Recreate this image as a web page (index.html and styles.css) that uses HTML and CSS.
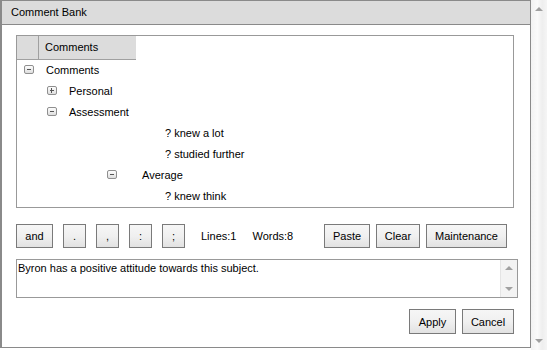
FILE: index.html
```html
<!DOCTYPE html>
<html>
<head>
<meta charset="utf-8">
<link rel="stylesheet" href="styles.css">
</head>
<body>
<div class="page">
  <div class="dialog">
    <div class="titlebar">Comment Bank</div>
    <div class="content">
      <div class="tree">
        <div class="tree-head">
          <div class="head-blank"></div>
          <div class="head-col">Comments</div>
        </div>
        <div class="row lvl0"><span class="tog minus"></span><span class="label">Comments</span></div>
        <div class="row lvl1"><span class="tog plus"></span><span class="label">Personal</span></div>
        <div class="row lvl1"><span class="tog minus"></span><span class="label">Assessment</span></div>
        <div class="row leaf"><span class="label">? knew a lot</span></div>
        <div class="row leaf"><span class="label">? studied further</span></div>
        <div class="row lvl2"><span class="tog minus"></span><span class="label">Average</span></div>
        <div class="row leaf"><span class="label">? knew think</span></div>
      </div>
      <div class="toolbar">
        <button class="btn w-and">and</button>
        <button class="btn w-p">.</button>
        <button class="btn w-p">,</button>
        <button class="btn w-p">:</button>
        <button class="btn w-p">;</button>
        <span class="stat lines">Lines:1</span>
        <span class="stat">Words:8</span>
        <span class="spacer"></span>
        <button class="btn w-paste">Paste</button>
        <button class="btn w-clear">Clear</button>
        <button class="btn w-maint">Maintenance</button>
      </div>
      <div class="textarea">
        <div class="ta-text">Byron has a positive attitude towards this subject.</div>
        <div class="ta-scroll">
          <span class="arr up"></span>
          <span class="arr down"></span>
        </div>
      </div>
      <div class="actions">
        <button class="btn w-apply">Apply</button>
        <button class="btn w-cancel">Cancel</button>
      </div>
    </div>
  </div>
  <div class="pagescroll">
    <span class="arr up"></span>
    <span class="arr down"></span>
  </div>
</div>
</body>
</html>
```
FILE: styles.css
```css
* { box-sizing: border-box; }
html, body { margin: 0; padding: 0; background: #fff; }
body {
  font-family: "Liberation Sans", Arial, sans-serif;
  font-size: 11px;
  color: #000;
}
.page {
  width: 547px;
  height: 350px;
  display: flex;
}
.dialog {
  width: 531px;
  height: 348px;
  border: 1px solid #8a8a8a;
  border-left-width: 2px;
  border-top-width: 1px;
  display: flex;
  flex-direction: column;
}
.titlebar {
  height: 24px;
  background: #dcdcdc;
  border-bottom: 1px solid #8a8a8a;
  padding-left: 9px;
  line-height: 23px;
  font-size: 11px;
}
.content {
  padding: 10px 0 0 14px;
  flex: 1;
  display: flex;
  flex-direction: column;
}
.tree {
  width: 498px;
  height: 173px;
  border: 1px solid #999;
  overflow: hidden;
}
.tree-head {
  display: flex;
  height: 24px;
  width: 119px;
  background: #dcdcdc;
  border-bottom: 1px solid #a0a0a0;
}
.head-blank {
  width: 22px;
  border-right: 1px solid #a0a0a0;
}
.head-col {
  flex: 1;
  padding-left: 6px;
  line-height: 23px;
}
.row {
  height: 21px;
  display: flex;
  align-items: center;
  padding-bottom: 2px;
}
.lvl0 { padding-left: 7px; }
.lvl1 { padding-left: 30px; }
.lvl2 { padding-left: 90px; }
.leaf { padding-left: 148px; }
.tog {
  width: 10px;
  height: 9px;
  border: 1px solid #8f8f8f;
  border-radius: 2px;
  background: linear-gradient(#fdfdfd, #dedede);
  position: relative;
  flex: none;
}
.tog::before {
  content: "";
  position: absolute;
  left: 2px;
  top: 3px;
  width: 4px;
  height: 1px;
  background: #555;
}
.plus::after {
  content: "";
  position: absolute;
  left: 3px;
  top: 1px;
  width: 1px;
  height: 5px;
  background: #555;
}
.lvl0 .label { margin-left: 12px; }
.lvl1 .label { margin-left: 12px; }
.lvl2 .label { margin-left: 25px; }
.toolbar {
  display: flex;
  align-items: center;
  margin-top: 16px;
  height: 24px;
  width: 491px;
}
.btn {
  font-family: "Liberation Sans", Arial, sans-serif;
  font-size: 11px;
  color: #000;
  height: 24px;
  border: 1px solid #7a7a7a;
  background: linear-gradient(#f6f6f6 0%, #f0f0f0 50%, #e2e2e2 100%);
  padding: 0;
  margin: 0;
  border-radius: 0;
}
.w-and { width: 37px; }
.w-p { width: 23px; margin-left: 10px; }
.stat { margin-left: 16px; }
.spacer { flex: 1; }
.w-paste { width: 46px; }
.w-clear { width: 44px; margin-left: 6px; }
.w-maint { width: 81px; margin-left: 6px; }
.textarea {
  margin-top: 11px;
  width: 502px;
  height: 39px;
  border: 1px solid #999;
  display: flex;
}
.ta-text {
  flex: 1;
  padding: 2px 0 0 1px;
}
.ta-scroll {
  width: 17px;
  background: #f3f3f3;
  border-left: 1px solid #e4e4e4;
  position: relative;
}
.arr {
  position: absolute;
  left: 50%;
  margin-left: -4px;
  width: 0;
  height: 0;
  border-left: 4px solid transparent;
  border-right: 4px solid transparent;
}
.arr.up { top: 6px; border-bottom: 4px solid #a0a0a0; }
.arr.down { bottom: 6px; border-top: 4px solid #a0a0a0; }
.actions {
  display: flex;
  justify-content: flex-end;
  margin-top: 11px;
  width: 498px;
  gap: 6px;
}
.w-apply { width: 47px; height: 25px; }
.w-cancel { width: 52px; height: 25px; }
.pagescroll {
  width: 16px;
  height: 350px;
  background: linear-gradient(90deg, #f2f2f2, #fafafa 40%, #eeeeee 70%, #f5f5f5);
  position: relative;
}
.pagescroll .arr.up { top: 7px; }
.pagescroll .arr.down { bottom: 7px; }
```
